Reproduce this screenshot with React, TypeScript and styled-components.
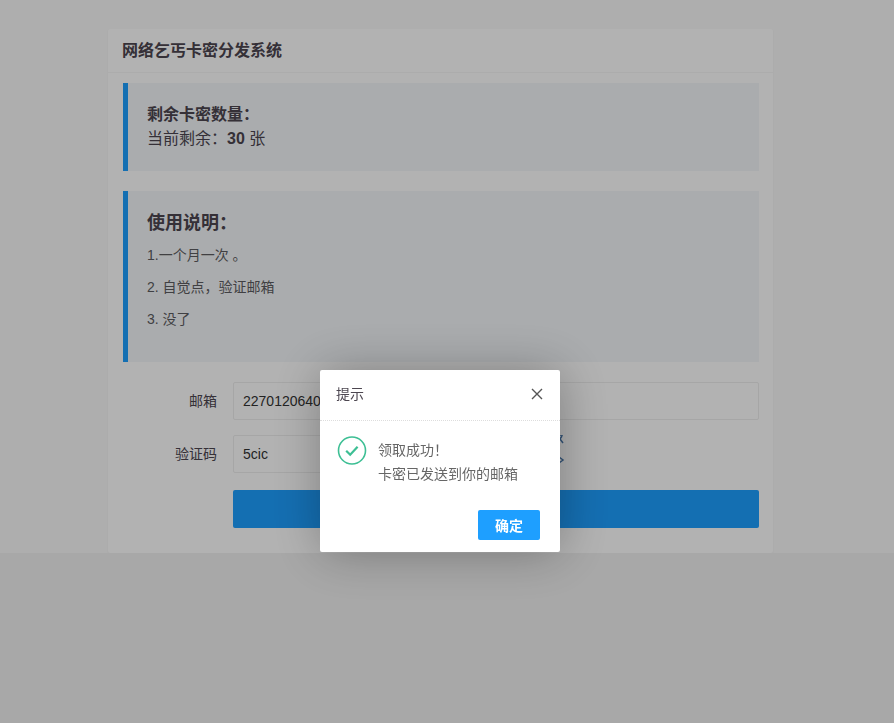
import React, { useState } from "react";
import styled, { createGlobalStyle } from "styled-components";

const GlobalStyle = createGlobalStyle`
  *, *::before, *::after { box-sizing: border-box; }
  body {
    margin: 0;
    background: #f1f1f1;
    color: #4c4650;
    font: 14px/24px "Liberation Sans", "Noto Sans CJK SC", sans-serif;
  }
  h1, h2, h3, p { margin: 0; }
  button, input { font: inherit; }
`;

const Page = styled.main`
  padding: 29px 121px 0 108px;
  background: #f9f9f9;
`;

const Card = styled.section`
  background: #fff;
  border-radius: 2px;
  box-shadow: 0 1px 2px rgba(0, 0, 0, 0.06);
`;

const CardTitle = styled.h1`
  padding: 0 14px;
  border-bottom: 1px solid #f6f6f6;
  font-size: 16px;
  line-height: 43px;
`;

const CardBody = styled.div`
  padding: 10px 14px 10px 15px;
`;

const Quote = styled.section`
  margin-bottom: 20px;
  padding: 20px 19px;
  border-left: 5px solid #1e9fff;
  background: #f4f7fa;
  font-size: 16px;
`;

const QuoteTitle = styled.h2`
  font-size: 16px;
  line-height: 24px;
`;

const GuideTitle = styled.h2`
  margin-bottom: 4px;
  font-size: 18px;
  line-height: 24px;
`;

const GuideText = styled.p`
  font-size: 14px;
  line-height: 32px;
  color: #5c5c60;
  &:last-child { margin-bottom: 7px; }
`;

const FormRow = styled.div`
  display: grid;
  grid-template-columns: 94px 1fr;
  column-gap: 16px;
  margin-bottom: 15px;
`;

const Label = styled.label`
  line-height: 38px;
  text-align: right;
`;

const Input = styled.input`
  width: 100%;
  height: 38px;
  padding: 0 9px;
  border: 1px solid #eee;
  border-radius: 2px;
  background: #fff;
  color: #333;
  outline: none;
`;

const CodeFields = styled.div`
  display: grid;
  grid-template-columns: 1fr 1fr;
  column-gap: 10px;
`;

const Captcha = styled.svg`
  width: 68px;
  height: 40px;
`;

const PrimaryButton = styled.button<{ $block?: boolean }>`
  grid-column: ${(p) => (p.$block ? "2" : "auto")};
  height: ${(p) => (p.$block ? "38px" : "30px")};
  padding: ${(p) => (p.$block ? "0 17px" : "2px 17px 0")};
  border: 0;
  border-radius: 2px;
  background: #1e9fff;
  color: #fff;
  font-weight: ${(p) => (p.$block ? "400" : "700")};
  cursor: pointer;
`;

const Shade = styled.div`
  position: fixed;
  inset: 0;
  display: flex;
  justify-content: center;
  align-items: flex-start;
  padding: 370px 14px 0 0;
  background: rgba(0, 0, 0, 0.3);
`;

const Dialog = styled.section`
  width: 240px;
  border-radius: 2px;
  background: #fff;
  box-shadow: 1px 1px 50px rgba(0, 0, 0, 0.3);
`;

const DialogHeader = styled.header`
  display: flex;
  align-items: center;
  justify-content: space-between;
  height: 51px;
  padding: 0 16px 2px;
  border-bottom: 1px dotted #ddd;
`;

const DialogTitle = styled.h2`
  font-size: 14px;
  font-weight: 400;
`;

const CloseButton = styled.button`
  display: flex;
  padding: 0;
  border: 0;
  background: none;
  color: #555;
  cursor: pointer;
`;

const DialogContent = styled.div`
  display: flex;
  gap: 11px;
  padding: 15px 17px 0;
  color: #666;
`;

const Message = styled.p`
  padding-top: 2px;
`;

const DialogFooter = styled.footer`
  display: flex;
  justify-content: flex-end;
  padding: 24px 20px 12px;
`;

export default function App() {
  const [open, setOpen] = useState(true);
  const close = () => setOpen(false);
  return (
    <>
      <GlobalStyle />
      <Page>
        <Card>
          <CardTitle>网络乞丐卡密分发系统</CardTitle>
          <CardBody>
            <Quote>
              <QuoteTitle>剩余卡密数量：</QuoteTitle>
              <p>当前剩余：<strong>30</strong> 张</p>
            </Quote>
            <Quote>
              <GuideTitle>使用说明：</GuideTitle>
              <GuideText>1.一个月一次 。</GuideText>
              <GuideText>2. 自觉点，验证邮箱</GuideText>
              <GuideText>3. 没了</GuideText>
            </Quote>
            <form onSubmit={(e) => e.preventDefault()}>
              <FormRow>
                <Label htmlFor="email">邮箱</Label>
                <Input id="email" defaultValue="2270120640" />
              </FormRow>
              <FormRow>
                <Label htmlFor="code">验证码</Label>
                <CodeFields>
                  <Input id="code" defaultValue="5cic" />
                  <Captcha viewBox="0 0 68 40" fill="none" stroke="#4a78ac" strokeWidth="1.5" aria-hidden="true">
                    <path d="M56 0h6M61 1l-2 3 3 4M58 22l4 3-4 3" />
                  </Captcha>
                </CodeFields>
              </FormRow>
              <FormRow>
                <PrimaryButton $block aria-label="领取" />
              </FormRow>
            </form>
          </CardBody>
        </Card>
      </Page>
      {open && (
        <Shade>
          <Dialog role="dialog" aria-modal="true" aria-labelledby="dialog-title">
            <DialogHeader>
              <DialogTitle id="dialog-title">提示</DialogTitle>
              <CloseButton type="button" aria-label="关闭" onClick={close}>
                <svg width="14" height="14" viewBox="0 0 14 14" fill="none" stroke="currentColor" strokeWidth="1.4">
                  <path d="M2 2l10 10M12 2L2 12" />
                </svg>
              </CloseButton>
            </DialogHeader>
            <DialogContent>
              <svg width="30" height="30" viewBox="0 0 30 30" fill="none" stroke="#3dbf94">
                <circle cx="15" cy="14.5" r="13.5" strokeWidth="1.6" />
                <path d="M9.2 14.7l4 4 7.400-8" strokeWidth="2.200" />
              </svg>
              <Message>领取成功！<br />卡密已发送到你的邮箱</Message>
            </DialogContent>
            <DialogFooter>
              <PrimaryButton type="button" onClick={close}>确定</PrimaryButton>
            </DialogFooter>
          </Dialog>
        </Shade>
      )}
    </>
  );
}
